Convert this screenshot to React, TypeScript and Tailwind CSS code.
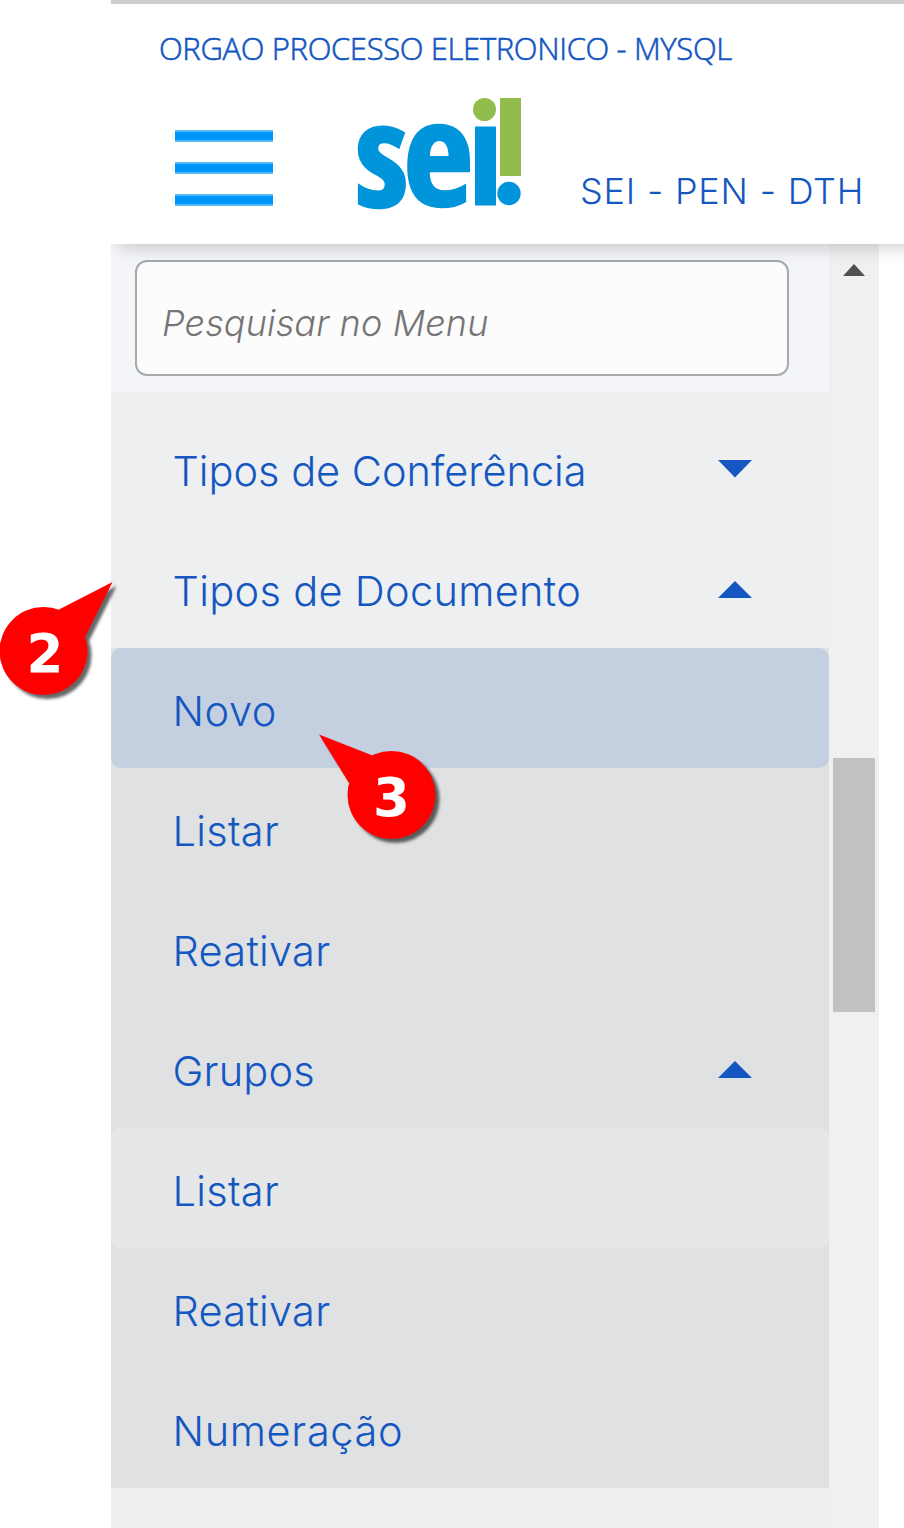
import React from "react";

type Item = {
  label: string;
  spacing: string;
  tone?: string;
  arrow?: "up" | "down";
};

const topItems: Item[] = [
  { label: "Tipos de Conferência", spacing: "tracking-[-0.02px]", arrow: "down" },
  { label: "Tipos de Documento", spacing: "tracking-[0.32px]", arrow: "up" },
];

const subItems: Item[] = [
  { label: "Novo", spacing: "tracking-[0.6px]", tone: "bg-[#c4cfe0]" },
  { label: "Listar", spacing: "tracking-[0.3px]" },
  { label: "Reativar", spacing: "tracking-[0.3px]" },
  { label: "Grupos", spacing: "tracking-[0.2px]", arrow: "up" },
  { label: "Listar", spacing: "tracking-[0.3px]", tone: "bg-[#e5e7e9]" },
  { label: "Reativar", spacing: "tracking-[0.3px]" },
  { label: "Numeração", spacing: "tracking-[0.65px]" },
];

function Arrow({ dir }: { dir: "up" | "down" }) {
  return dir === "down" ? (
    <svg width="34" height="18" viewBox="0 0 34 18" className="mt-[2px] shrink-0" fill="#1557c0">
      <path d="M0 0H34L17 17.5Z" />
    </svg>
  ) : (
    <svg width="34" height="18" viewBox="0 0 34 18" className="mt-[4px] shrink-0" fill="#1557c0">
      <path d="M0 17H34L17 0Z" />
    </svg>
  );
}

function MenuRow({ label, spacing, tone, arrow }: Item) {
  return (
    <li
      className={`flex h-[120px] items-center justify-between rounded-[10px] pr-[77px] pl-[61.5px] ${tone ?? ""}`}
    >
      <span
        className={`pt-[6px] font-['Inter',sans-serif] text-[41.5px] leading-[60px] font-[270] whitespace-nowrap text-[#1557c0] ${spacing}`}
      >
        {label}
      </span>
      {arrow && <Arrow dir={arrow} />}
    </li>
  );
}

function Logo() {
  return (
    <svg width="166" height="112" viewBox="356 97 166 112" className="shrink-0 overflow-visible">
      <g
        fill="#0095da"
        stroke="#0095da"
        strokeWidth="2.5"
        fontFamily="'Open Sans', sans-serif"
        fontSize="143"
        className="font-bold [font-stretch:75%]"
      >
        <text x="355" y="206.500">s</text>
        <text transform="translate(403 206) scale(1.08 1.01)">e</text>
      </g>
      <rect x="475" y="126.500" width="21" height="79" fill="#0095da" />
      <circle cx="509" cy="193.500" r="11.700" fill="#0095da" />
      <circle cx="484.500" cy="109.500" r="11.500" fill="#90bd4c" />
      <rect x="500" y="98" width="21" height="78" fill="#90bd4c" />
    </svg>
  );
}

function Header() {
  return (
    <header className="relative z-10 h-[244px] w-[840px] shrink-0 border-t-4 border-[#cbcdcd] bg-white shadow-[8px_4px_16px_rgba(0,0,0,0.18)]">
      <div className="pt-[24px] pl-[48px] text-[31px] leading-[40px] font-light tracking-[-0.35px] whitespace-nowrap text-[#1557c0] [-webkit-text-stroke:0.6px_#1557c0]">
        ORGAO PROCESSO ELETRONICO - MYSQL
      </div>
      <div className="flex pt-[29px] pl-[64px]">
        <div className="mt-[33px] flex w-[98px] shrink-0 flex-col gap-[20px]">
          <span className="h-[12px] border-y-2 border-[#55b8fb] bg-[#0095f8]" />
          <span className="h-[12px] border-y-2 border-[#55b8fb] bg-[#0095f8]" />
          <span className="h-[12px] border-y-2 border-[#55b8fb] bg-[#0095f8]" />
        </div>
        <div className="ml-[83px]">
          <Logo />
        </div>
        <div className="mt-[70px] ml-[58px] font-['Inter',sans-serif] text-[36px] leading-[48px] font-[270] tracking-[0.8px] whitespace-nowrap text-[#1557c0]">
          SEI - PEN - DTH
        </div>
      </div>
    </header>
  );
}

type CalloutProps = { n: number; points: string; cx: number; cy: number; tx: number };

function Callout({ n, points, cx, cy, tx }: CalloutProps) {
  return (
    <g>
      <g fill="#ff0000" className="[filter:drop-shadow(4px_4px_1.5px_rgba(0,0,0,0.6))]">
        <circle cx={cx} cy={cy} r="44" />
        <polygon points={points} />
      </g>
      <text
        x={tx}
        y={cy + 21}
        textAnchor="middle"
        fill="#fff"
        fontSize="53"
        fontWeight="700"
        fontFamily="'DejaVu Sans', sans-serif"
      >
        {n}
      </text>
    </g>
  );
}

export default function App() {
  return (
    <div className="relative h-[1528px] w-[904px] overflow-hidden bg-white pl-[111px] font-['Open_Sans',sans-serif]">
      <div className="flex h-full flex-col overflow-hidden">
        <Header />
        <main className="flex min-h-0 flex-1">
          <nav className="w-[718px] bg-[#edeff1]">
            <div className="h-[148px] bg-[#f4f5f8] px-[24px] pt-[16px]">
              <input
                placeholder="Pesquisar no Menu"
                className="block h-[116px] w-[654px] rounded-[12px] border-2 border-[#a5abab] bg-[#fcfcfc] px-[25px] pt-[9px] font-['Inter',sans-serif] text-[36px] font-[270] tracking-[0.15px] italic outline-none placeholder:text-[#757575]"
              />
            </div>
            <ul className="pt-[16px]">
              {topItems.map((it) => (
                <MenuRow key={it.label} {...it} />
              ))}
            </ul>
            <ul className="bg-[#dfe1e3]">
              {subItems.map((it, i) => (
                <MenuRow key={i} {...it} />
              ))}
            </ul>
          </nav>
          <div className="flex w-[50px] flex-col items-center bg-[#f0f0f0] pt-[20px]">
            <svg width="22" height="12" viewBox="0 0 22 12" fill="#505050">
              <path d="M11 0L22 12H0Z" />
            </svg>
            <div className="mt-[482px] h-[254px] w-[42px] bg-[#c1c1c1]" />
          </div>
        </main>
      </div>
      <svg className="pointer-events-none absolute inset-0 z-20" width="904" height="1528">
        <Callout n={2} cx={43.5} cy={651} tx={45} points="112.500,582 58,610 44,651 85,637" />
        <Callout n={3} cx={391.5} cy={795} tx={391.5} points="319,734.500 372.500,755.500 391,795 349,783" />
      </svg>
    </div>
  );
}
